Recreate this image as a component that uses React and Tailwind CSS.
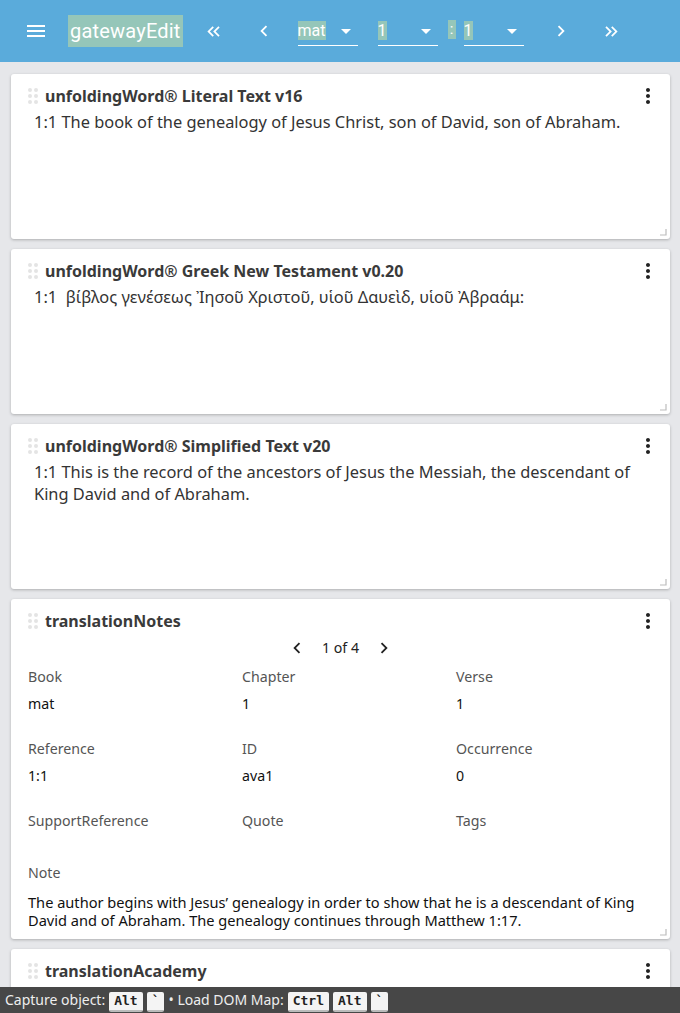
import {
  MdMenu,
  MdMoreVert,
  MdArrowDropDown,
  MdChevronLeft,
  MdChevronRight,
  MdKeyboardDoubleArrowLeft,
  MdKeyboardDoubleArrowRight,
} from 'react-icons/md';

const sans = { fontFamily: '"Noto Sans", "Open Sans", sans-serif' };

function DragHandle() {
  return (
    <div className="grid grid-cols-2 gap-x-[2px] gap-y-[2px] mr-[7px] w-[10px]">
      {[0, 1, 2, 3, 4, 5].map((i) => (
        <span key={i} className="w-[4px] h-[4px] rounded-full bg-[#e4e4e4]" />
      ))}
    </div>
  );
}

function ResizeCorner() {
  return (
    <svg className="absolute right-[3px] bottom-[3px]" width="7" height="7" viewBox="0 0 7 7">
      <path d="M6 0 V6 H0" fill="none" stroke="#bdbdbd" strokeWidth="1.2" />
    </svg>
  );
}

function Card({ title, height, children }) {
  return (
    <div
      className="relative bg-white rounded-[3px] shadow-[0_1px_3px_rgba(0,0,0,0.25)] ml-[11px] mr-[10px]"
      style={{ height }}
    >
      <div className="flex items-center pl-[17px] pr-[10px] pt-[10px]">
        <DragHandle />
        <div className="text-[16px] font-bold text-[#3a3a3a] leading-[22px] flex-1">{title}</div>
        <MdMoreVert className="text-[24px] text-[#222]" />
      </div>
      {children}
      <ResizeCorner />
    </div>
  );
}

function Select({ value }) {
  return (
    <div className="relative flex items-center border-b border-white h-[30px] w-[60px]">
      <span className="bg-[#95c6b9] text-white text-[16px] leading-[19px]">{value}</span>
      <MdArrowDropDown className="absolute right-0 text-white text-[24px]" />
    </div>
  );
}

function Field({ label, value }) {
  return (
    <div>
      <div className="text-[14.2px] text-[#555] leading-[18px]">{label}</div>
      <div className="text-[14.2px] text-[#111] leading-[18px] mt-[9px] h-[18px]">{value}</div>
    </div>
  );
}

function Kbd({ children }) {
  return (
    <span
      className="bg-[#f4f4f4] text-[#222] text-[13px] font-bold rounded-[2px] px-[5px] leading-[18px] h-[20px] border-b-2 border-[#bbb] mt-[3px]"
      style={{ fontFamily: '"DejaVu Sans Mono", monospace' }}
    >
      {children}
    </span>
  );
}

export default function App() {
  return (
    <div className="bg-[#e6e7ea] h-[1013px] overflow-hidden relative" style={sans}>
      <header
        className="h-[62px] bg-[#5aabdb] flex items-center text-white"
        style={{ fontFamily: 'Roboto, sans-serif' }}
      >
        <MdMenu className="ml-[24px] text-[24px]" />
        <div className="ml-[20px] bg-[#95c6b9] text-[20px] leading-[32px] h-[32px] px-[2px] tracking-[0.2px]">
          gatewayEdit
        </div>
        <MdKeyboardDoubleArrowLeft className="ml-[20px] text-[21px]" />
        <MdChevronLeft className="ml-[29px] text-[22px]" />
        <div className="ml-[23px]">
          <Select value="mat" />
        </div>
        <div className="ml-[20px]">
          <Select value="1" />
        </div>
        <span className="ml-[10px] bg-[#95c6b9] text-[15px] w-[8px] text-center leading-[19px] mt-[-4px]">:</span>
        <div className="ml-[8px]">
          <Select value="1" />
        </div>
        <MdChevronRight className="ml-[26px] text-[22px]" />
        <MdKeyboardDoubleArrowRight className="ml-[29px] text-[21px]" />
      </header>

      <div className="pt-[12px] flex flex-col gap-[10px]">
        <Card title="unfoldingWord® Literal Text v16" height={165}>
          <p className="pl-[23px] pr-[20px] text-[16.4px] text-[#333] leading-[22px] mt-[3px]">
            1:1 The book of the genealogy of Jesus Christ, son of David, son of Abraham.
          </p>
        </Card>
        <Card title="unfoldingWord® Greek New Testament v0.20" height={165}>
          <p className="pl-[23px] pr-[20px] text-[16.4px] text-[#333] leading-[22px] mt-[3px]">
            1:1&nbsp; βίβλος γενέσεως Ἰησοῦ Χριστοῦ, υἱοῦ Δαυεὶδ, υἱοῦ Ἀβραάμ:
          </p>
        </Card>
        <Card title="unfoldingWord® Simplified Text v20" height={165}>
          <p className="pl-[23px] pr-[30px] text-[16.4px] text-[#333] leading-[22px] mt-[3px]">
            1:1 This is the record of the ancestors of Jesus the Messiah, the descendant of King
            David and of Abraham.
          </p>
        </Card>
        <Card title="translationNotes" height={340}>
          <div className="flex items-center justify-center mt-[4px] text-[#222]">
            <MdChevronLeft className="text-[22px]" />
            <span className="text-[14.2px] mx-[14px]">1 of 4</span>
            <MdChevronRight className="text-[22px]" />
          </div>
          <div className="grid grid-cols-3 pl-[17px] gap-y-[27px] mt-[9px]">
            <Field label="Book" value="mat" />
            <Field label="Chapter" value="1" />
            <Field label="Verse" value="1" />
            <Field label="Reference" value="1:1" />
            <Field label="ID" value="ava1" />
            <Field label="Occurrence" value="0" />
            <Field label="SupportReference" value="" />
            <Field label="Quote" value="" />
            <Field label="Tags" value="" />
          </div>
          <div className="pl-[17px] pr-[30px] mt-[7px]">
            <div className="text-[14.2px] text-[#555] leading-[18px]">Note</div>
            <p className="text-[14.6px] text-[#111] leading-[18px] mt-[11px]">
              The author begins with Jesus’ genealogy in order to show that he is a descendant of
              King David and of Abraham. The genealogy continues through Matthew 1:17.
            </p>
          </div>
        </Card>
        <Card title="translationAcademy" height={165} />
      </div>

      <div className="absolute left-0 right-0 bottom-0 h-[26px] bg-[#474747] flex items-start pt-[2px] px-[5px] text-[14px] text-[#eee] gap-[4px]">
        <span className="leading-[22px]">Capture object:</span>
        <Kbd>Alt</Kbd>
        <Kbd>`</Kbd>
        <span className="leading-[22px]">• Load DOM Map:</span>
        <Kbd>Ctrl</Kbd>
        <Kbd>Alt</Kbd>
        <Kbd>`</Kbd>
      </div>
    </div>
  );
}
